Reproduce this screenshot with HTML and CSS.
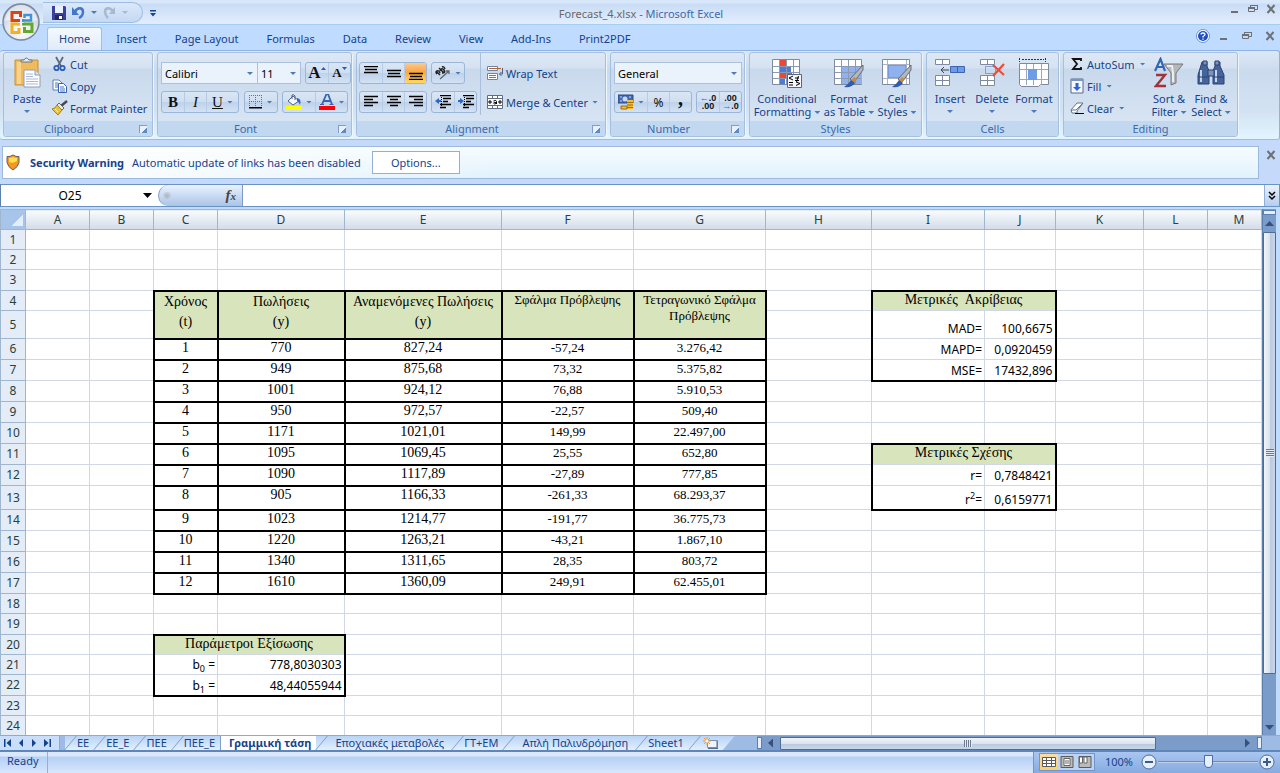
FILE: index.html
```html
<!DOCTYPE html>
<html lang="el">
<head>
    <meta charset="UTF-8">
    <meta name="viewport" content="width=device-width, initial-scale=1.0">
    <title>Forecast_4.xlsx - Microsoft Excel</title>
    <link rel="stylesheet" href="styles.css">
</head>
<body>
    <header class="titlebar">
        <button class="office" aria-label="Office">
            <svg width="40" height="40" viewBox="0 0 40 40">
                <defs>
                    <radialGradient id="orb" cx="50%" cy="75%" r="75%"><stop offset="0" stop-color="#fff"/><stop offset=".55" stop-color="#dfe5ef"/><stop offset="1" stop-color="#a9b6cc"/></radialGradient>
                </defs>
                <circle cx="20" cy="20" r="18" fill="url(#orb)" stroke="#7a879d" stroke-width="1.5"/>
                <path d="M4 19a16 16 0 0 1 32 0q-16-5-32 0z" fill="#fff" opacity=".55"/>
                <g fill="none" stroke-width="3">
                    <path d="M17 18.500H11V10.500h8.500V15" stroke="#dc4310"/>
                    <path d="M23 18.500h7V13h-6.500v3" stroke="#3f94dd" stroke-width="2.500"/>
                    <path d="M17 22h-6v8.500h7V26" stroke="#f5b21c"/>
                    <path d="M22.500 22H31v7.500h-7.500V25" stroke="#63a72c"/>
                </g>
                <path d="M16 17h3v3h-3z" fill="#dc4310"/><path d="M21 17h2.500v3H21z" fill="#3f94dd"/><path d="M16 21h3v2.500h-3z" fill="#f5b21c"/><path d="M21 21h2.500v2.500H21z" fill="#63a72c"/>
            </svg>
        </button>
        <div class="quick">
            <button aria-label="Save"><svg width="14" height="14" viewBox="0 0 14 14"><path d="M0 0h13l1 1v13H0z" fill="#3a3f9d"/><path d="M3 0h8v7H3z" fill="#e8f0fc"/><path d="M3 9h8v5H3z" fill="#23265f"/><path d="M7 10h3v3H7z" fill="#fff"/></svg></button>
            <button aria-label="Undo"><svg width="13" height="13" viewBox="0 0 13 13"><path d="M3 6C5 1 11 1 11 6c0 3-2 5-4 6" fill="none" stroke="#4377c9" stroke-width="2.500"/><path d="M0 1v8h7z" fill="#4377c9"/></svg></button>
            <span class="arrow"></span>
            <button aria-label="Redo"><svg width="13" height="13" viewBox="0 0 13 13"><path d="M10 6C8 1 2 1 2 6c0 3 2 5 3 6" fill="none" stroke="#a9b8cd" stroke-width="2.500"/><path d="M12 1v7H6z" fill="#a9b8cd"/></svg></button>
            <span class="arrow pale"></span>
        </div>
        <button class="customize" aria-label="Customize"><svg width="6" height="7" viewBox="0 0 6 7"><path d="M0 0h6v1.500H0zM0 3h6L3 6.500z" fill="#1b448e"/></svg></button>
        <h1 class="title"><span>Forecast_4.xlsx</span> - Microsoft Excel</h1>
        <div class="win-buttons">
            <button aria-label="Minimize"><svg width="10" height="10" viewBox="0 0 10 10"><path d="M1 7h7v2H1z" fill="#6d7175"/></svg></button>
            <button aria-label="Restore"><svg width="10" height="10" viewBox="0 0 10 10"><path d="M.5 3.500h6v4h-6zM2.500 3V1.500h7v4H7" fill="none" stroke="#6d7175"/><path d="M0 3h7v2H0zM2 1h8v1H2z" fill="#6d7175"/></svg></button>
            <button aria-label="Close"><svg width="10" height="10" viewBox="0 0 10 10"><path d="M1.500 1l7 8M8.500 1l-7 8" stroke="#6d7175" stroke-width="2"/></svg></button>
        </div>
    </header>

    <nav class="menu">
        <a class="active" href="#">Home</a>
        <a href="#">Insert</a>
        <a href="#">Page Layout</a>
        <a href="#">Formulas</a>
        <a href="#">Data</a>
        <a href="#">Review</a>
        <a href="#">View</a>
        <a href="#">Add-Ins</a>
        <a href="#">Print2PDF</a>
        <div class="win-buttons">
            <button aria-label="Help"><svg width="14" height="14" viewBox="0 0 14 14"><circle cx="7" cy="7" r="6.500" fill="#fff" stroke="#6f93c8"/><circle cx="7" cy="7" r="5" fill="#1d50c4"/><path d="M5 5.500Q5 4 7 4t2 1.500Q9 6.500 7 7.500v1M7 9.500v1.200" fill="none" stroke="#fff" stroke-width="1.300"/></svg></button>
            <button aria-label="Minimize workbook"><svg width="10" height="10" viewBox="0 0 10 10"><path d="M1 7h7v2H1z" fill="#6d7175"/></svg></button>
            <button aria-label="Restore workbook"><svg width="10" height="10" viewBox="0 0 10 10"><path d="M.5 3.500h6v4h-6zM2.500 3V1.500h7v4H7" fill="none" stroke="#6d7175"/><path d="M0 3h7v2H0zM2 1h8v1H2z" fill="#6d7175"/></svg></button>
            <button aria-label="Close workbook"><svg width="10" height="10" viewBox="0 0 10 10"><path d="M1.500 1l7 8M8.500 1l-7 8" stroke="#6d7175" stroke-width="2"/></svg></button>
        </div>
    </nav>

    <section class="ribbon">
        <div class="group clipboard">
            <div class="tools">
                <button class="big">
                    <svg width="28" height="32" viewBox="0 0 28 32"><path d="M2 3h23v25H2z" fill="#f0bb5c" stroke="#c4903b"/><path d="M4 5h4v22H4z" fill="#f8d38d"/><path d="M8 5V3h3q2-4 5 0h3v2z" fill="#e4e9f0" stroke="#6c7687"/><path d="M11 13h11l5 5v12H11z" fill="#fff" stroke="#8e9db5"/><path d="M22 13v5h5" fill="#dbe5f2" stroke="#8e9db5"/><path d="M13 17h7M13 19.500h7M13 22h12M13 24.500h12M13 27h12" stroke="#aab9cf"/></svg>
                    <span>Paste</span><span class="arrow"></span>
                </button>
                <div class="stack">
                    <button><svg width="16" height="16" viewBox="0 0 16 16"><path d="M4 1l5 9M11 1l-5 9" stroke="#5c6b82" stroke-width="1.800"/><circle cx="4.500" cy="12" r="2.200" fill="none" stroke="#2f5db5" stroke-width="1.800"/><circle cx="10.500" cy="12" r="2.200" fill="none" stroke="#2f5db5" stroke-width="1.800"/></svg>Cut</button>
                    <button><svg width="16" height="16" viewBox="0 0 16 16"><path d="M1 2h6l3 3v7H1z" fill="#fff" stroke="#5c7fb8"/><path d="M3 5h3M3 7h4M3 9h4" stroke="#4377c9"/><path d="M6.500 5.500h5l3 3v6h-8z" fill="#fff" stroke="#3561ad"/><path d="M8 9h4M8 11h5M8 13h5" stroke="#4377c9"/></svg>Copy</button>
                    <button><svg width="16" height="16" viewBox="0 0 16 16"><path d="M15 1l-6 5" stroke="#444a58" stroke-width="2.500"/><path d="M7 3l5 5-2 2-5-5z" fill="#e9eaf0" stroke="#666"/><path d="M5 5l5 5-4 5-6-6q3 0 5-4z" fill="#ecc33d" stroke="#a5801c"/><path d="M3 9l3 3" stroke="#fff3b5"/></svg>Format Painter</button>
                </div>
            </div>
            <h2>Clipboard<i class="launch"></i></h2>
        </div>

        <div class="group font">
            <div class="tools rows">
                <div class="row">
                    <div class="pair">
                        <select class="font-name" aria-label="Font"><option>Calibri</option></select>
                        <select class="font-size" aria-label="Font size"><option>11</option></select>
                    </div>
                    <div class="set">
                        <button class="grow" aria-label="Increase size"><b>A</b><svg width="5" height="3" viewBox="0 0 5 3"><path d="M0 3h5L2.500 0z" fill="#2b5ca8"/></svg></button>
                        <button class="shrink" aria-label="Decrease size"><b>A</b><svg width="5" height="3" viewBox="0 0 5 3"><path d="M0 0h5L2.500 3z" fill="#2b5ca8"/></svg></button>
                    </div>
                </div>
                <div class="row">
                    <div class="set letters">
                        <button><b>B</b></button>
                        <button><i>I</i></button>
                        <button class="wide"><u>U</u><span class="arrow"></span></button>
                    </div>
                    <div class="set">
                        <button class="wide" aria-label="Borders"><svg width="14" height="14" viewBox="0 0 14 14"><path d="M.5 0v12M6.500 0v12M12.500 0v12M0 .5h13M0 6.500h13" stroke="#66707f" stroke-dasharray="1 1"/><path d="M0 12h13v1.500H0z" fill="#000"/></svg><span class="arrow"></span></button>
                    </div>
                    <div class="set">
                        <button class="wide" aria-label="Fill colour"><svg width="16" height="16" viewBox="0 0 16 16"><path d="M2 7l5-5 6 5-6 4z" fill="#f5f8fd" stroke="#4e6287"/><path d="M6 5V1q2-1 3 1v4" fill="none" stroke="#4e6287"/><path d="M11 4q5 1 3 7-1-3-3-4z" fill="#2d66c4"/><path d="M0 12h16v4H0z" fill="#ff0"/></svg><span class="arrow"></span></button>
                        <button class="wide" aria-label="Font colour"><svg width="16" height="16" viewBox="0 0 16 16"><path d="M0 12h16v4H0z" fill="#f00"/><path d="M3 10.500L7.500 0h1.500l4 10.500M4 7h7" fill="none" stroke="#3665ad" stroke-width="1.800"/><path d="M1 10.500h4M10.500 10.500h4" stroke="#3665ad"/></svg><span class="arrow"></span></button>
                    </div>
                </div>
            </div>
            <h2>Font<i class="launch"></i></h2>
        </div>

        <div class="group alignment">
            <div class="tools">
                <div class="rows">
                    <div class="row">
                        <div class="set">
                            <button aria-label="Top align"><svg width="14" height="14" viewBox="0 0 14 14"><path d="M0 .5h14M1 3.500h12M0 6.500h14" stroke="#000" stroke-width="1.500"/></svg></button>
                            <button aria-label="Middle align"><svg width="14" height="14" viewBox="0 0 14 14"><path d="M0 4.500h14M1 7.500h12M0 10.500h14" stroke="#000" stroke-width="1.500"/></svg></button>
                            <button class="on" aria-label="Bottom align"><svg width="14" height="14" viewBox="0 0 14 14"><path d="M0 7.500h14M1 10.500h12M0 13.500h14" stroke="#000" stroke-width="1.500"/></svg></button>
                        </div>
                        <div class="set">
                            <button class="wide" aria-label="Orientation"><svg width="16" height="14" viewBox="0 0 16 14"><path d="M1 5l4 4M2 8q-2-2 0-3t3 2M4 2l5 5M5 5q2-4 4-1t-2 3M10 3q-1-3-3-2" fill="none" stroke="#222" stroke-width="1.500"/><path d="M5 13l9-8M14 8V5h-3" stroke="#5c6574" fill="none" stroke-width="1.300"/></svg><span class="arrow"></span></button>
                        </div>
                    </div>
                    <div class="row">
                        <div class="set">
                            <button aria-label="Align left"><svg width="14" height="14" viewBox="0 0 14 14"><path d="M0 1.500h14M0 4.500h9M0 7.500h14M0 10.500h9" stroke="#000" stroke-width="1.500"/></svg></button>
                            <button aria-label="Center"><svg width="14" height="14" viewBox="0 0 14 14"><path d="M0 1.500h14M3 4.500h8M0 7.500h14M3 10.500h8" stroke="#000" stroke-width="1.500"/></svg></button>
                            <button aria-label="Align right"><svg width="14" height="14" viewBox="0 0 14 14"><path d="M0 1.500h14M5 4.500h9M0 7.500h14M5 10.500h9" stroke="#000" stroke-width="1.500"/></svg></button>
                        </div>
                        <div class="set">
                            <button aria-label="Decrease indent"><svg width="16" height="14" viewBox="0 0 16 14"><path d="M5 .5h11M8 3.500h8M8 6.500h5M5 9.500h11M5 12.500h6" stroke="#000" stroke-width="1.500"/><path d="M6.500 0v14" stroke="#000" stroke-dasharray="1 1"/><path d="M0 6l4-3v2h2v2H4v2z" fill="#2c66c9"/></svg></button>
                            <button aria-label="Increase indent"><svg width="16" height="14" viewBox="0 0 16 14"><path d="M5 .5h11M8 3.500h8M8 6.500h5M5 9.500h11M5 12.500h6" stroke="#000" stroke-width="1.500"/><path d="M6.500 0v14" stroke="#000" stroke-dasharray="1 1"/><path d="M6 6L2 3v2H0v2h2v2z" fill="#2c66c9"/></svg></button>
                        </div>
                    </div>
                </div>
                <div class="rows labelled">
                    <button><svg width="17" height="16" viewBox="0 0 17 16"><path d="M.5 1.500h10v4H.5zM.5 8.500h10v6H.5z" fill="#fff" stroke="#6d82a6"/><path d="M2 3.500h12M2 10.500h7M2 12.500h7" stroke="#b3672a"/><path d="M15.500 3v6h-3M14.500 7l-2 2 2 2" fill="none" stroke="#4f6285"/></svg>Wrap Text</button>
                    <button><svg width="17" height="16" viewBox="0 0 17 16"><path d="M.5 1.500h15v13H.5z" fill="#fff" stroke="#5d6d88"/><path d="M1 4.500h14M1 11.500h14M5.500 2v3M10.500 2v3M5.500 11v3M10.500 11v3" stroke="#5d6d88"/><path d="M1 8h4M3 6v4M11 8h4M13 6v4M6.500 7q3-1.500 3 .5V10M9.500 8.500q-3-.5-3 .7t3 .3" fill="none" stroke="#000"/></svg>Merge &amp; Center<span class="arrow"></span></button>
                </div>
            </div>
            <h2>Alignment<i class="launch"></i></h2>
        </div>

        <div class="group number">
            <div class="tools rows">
                <select class="format" aria-label="Number format"><option>General</option></select>
                <div class="row">
                    <div class="set">
                        <button class="wide money" aria-label="Accounting format"><svg width="16" height="16" viewBox="0 0 16 16"><path d="M0 1h15v8H0z" fill="#4269b3" stroke="#2d4986"/><circle cx="7" cy="5" r="2.500" fill="#c9d8f1"/><path d="M2 3h2M11 3h2M2 7h2M11 7h2" stroke="#c9d8f1"/><path d="M9 6h6v9H9z" fill="#f3bd2d"/><path d="M9 8.500h6M9 11h6M9 13.500h6" stroke="#a06d10"/><path d="M3 12h6v3H3z" fill="#f3bd2d" stroke="#a06d10"/></svg><span class="arrow"></span></button>
                        <button class="sign">%</button>
                        <button class="sign comma"><b>,</b></button>
                    </div>
                    <div class="set decimals">
                        <button><span><em>←</em>.0</span><span>.00</span></button>
                        <button><span>.00</span><span><em>→</em>.0</span></button>
                    </div>
                </div>
            </div>
            <h2>Number<i class="launch"></i></h2>
        </div>

        <div class="group styles">
            <div class="tools">
                <button class="big">
                    <svg width="30" height="30" viewBox="0 0 30 30"><path d="M.5 1.500h27v25H.5z" fill="#fff" stroke="#7e8a9f"/><path d="M7 2h7v6H7z" fill="#ea4a35"/><path d="M7 8h12v6H7z" fill="#4d7cd8"/><path d="M7 14h13v6H7z" fill="#ea4a35"/><path d="M7 20h6v6H7z" fill="#4d7cd8"/><path d="M7.500 2v24M14.500 2v24M21.500 2v24M1 8.500h26M1 14.500h26M1 20.500h26" stroke="#8c99b3"/><path d="M15.500 16.500h14v13h-14z" fill="#f6f6fa" stroke="#5f6678"/><path d="M21 18l-4 2 4 2M17 24.500h4M17 27h4M23 20h4M23 22.500h4M24 24l4 1.500-4 2M26.500 18l-2 6" fill="none" stroke="#000"/></svg>
                    <span>Conditional</span><span>Formatting<span class="arrow"></span></span>
                </button>
                <button class="big">
                    <svg width="30" height="30" viewBox="0 0 30 30"><path d="M.5 1.500h27v25H.5z" fill="#fff" stroke="#7e8a9f"/><path d="M7 8h21v18H7z" fill="#8fb2ee"/><path d="M7.500 2v24M14.500 2v24M21.500 2v24M1 8.500h26M1 14.500h26M1 20.500h26" stroke="#8c99b3"/><path d="M29 7v5l-9 12-4-3z" fill="#b3b7c0" stroke="#666c78"/><path d="M20 19l3 2-3 4-3-2z" fill="#c98b3a"/><path d="M17 22l4 3q-3 5-11 4 4-2 7-7z" fill="#2f5bb0"/></svg>
                    <span>Format</span><span>as Table<span class="arrow"></span></span>
                </button>
                <button class="big">
                    <svg width="30" height="30" viewBox="0 0 30 30"><path d="M.5 1.500h27v25H.5z" fill="#fff" stroke="#7e8a9f"/><path d="M6 7h18v13H6z" fill="#8fb2ee" stroke="#5d86cf"/><path d="M5.500 2v24M24.500 2v24M1 6.500h26M1 20.500h26" stroke="#a9b3c7"/><path d="M29 7v5l-9 12-4-3z" fill="#b3b7c0" stroke="#666c78"/><path d="M20 19l3 2-3 4-3-2z" fill="#c98b3a"/><path d="M17 22l4 3q-3 5-11 4 4-2 7-7z" fill="#2f5bb0"/></svg>
                    <span>Cell</span><span>Styles<span class="arrow"></span></span>
                </button>
            </div>
            <h2>Styles</h2>
        </div>

        <div class="group cells">
            <div class="tools">
                <button class="big">
                    <svg width="30" height="30" viewBox="0 0 30 30"><path d="M.5 1.500h14v5H.5zM7.500 2v5M.5 17.500h14v10H.5zM7.500 18v9M1 22.500h13" fill="#fff" stroke="#7e8a9f"/><path d="M15.500 8.500h14v6h-14z" fill="#6d9be6" stroke="#3c64b0"/><path d="M22.500 9v6" stroke="#3c64b0"/><path d="M6 12h8M9 9l-3 3 3 3" fill="none" stroke="#3d4654"/></svg>
                    <span>Insert</span><span class="arrow"></span>
                </button>
                <button class="big">
                    <svg width="30" height="30" viewBox="0 0 30 30"><path d="M3.500 1.500h14v5h-14zM10.500 2v5M3.500 17.500h14v10h-14zM10.500 18v9M4 22.500h13" fill="#fff" stroke="#7e8a9f"/><path d="M8.500 8.500h10v7h-10z" fill="none" stroke="#3c64b0" stroke-dasharray="1 1"/><path d="M16 7l11 10M27 6L16 18" stroke="#ee4b35" stroke-width="2.200"/></svg>
                    <span>Delete</span><span class="arrow"></span>
                </button>
                <button class="big">
                    <svg width="32" height="30" viewBox="0 0 32 30"><path d="M1.500 5.500h29v21h-8l-2 2h-17l-2-2z" fill="#fff" stroke="#7e8a9f"/><path d="M8.500 6v21M23.500 6v21M2 11.500h28M2 21.500h28M15.500 6v21" stroke="#9aa7bd"/><path d="M10 11h9v11h-9z" fill="#6d9be6"/><path d="M1.500 0v4M27.500 0v4M4 1.500h22" stroke="#333" stroke-dasharray="2 1"/></svg>
                    <span>Format</span><span class="arrow"></span>
                </button>
            </div>
            <h2>Cells</h2>
        </div>

        <div class="group editing">
            <div class="tools">
                <div class="stack">
                    <button><svg width="14" height="16" viewBox="0 0 14 16"><path d="M11 5V3H3l4 5-4 5h8v-2" fill="none" stroke="#111" stroke-width="1.800"/></svg>AutoSum<span class="arrow"></span></button>
                    <button><svg width="14" height="16" viewBox="0 0 14 16"><path d="M1 1h12v14H1z" fill="#f5f9ff" stroke="#56698d"/><path d="M1 1h12v2H1z" fill="#7c95c2"/><path d="M5.500 5h3v4H11l-4 4-4-4h2.500z" fill="#2a67d3"/></svg>Fill<span class="arrow"></span></button>
                    <button><svg width="14" height="16" viewBox="0 0 14 16"><path d="M1 10l6-7h6l-6 8v2H2z" fill="#fff" stroke="#69758b"/><path d="M1 10h5l7-7" fill="none" stroke="#69758b"/><path d="M5 13.500h9" stroke="#000"/></svg>Clear<span class="arrow"></span></button>
                </div>
                <button class="big">
                    <svg width="30" height="30" viewBox="0 0 30 30"><path d="M1 13L6.500 1 11 13M3 9h7" fill="none" stroke="#3565b5" stroke-width="2.200"/><path d="M2 17h9L2 28h10" fill="none" stroke="#a1333a" stroke-width="2.400"/><path d="M10 6h19l-7 9v10l-5 2V15z" fill="#b5b7ba" stroke="#76797e"/><path d="M13 8h5l1 7v9" fill="none" stroke="#eceded" stroke-width="2"/></svg>
                    <span>Sort &amp;</span><span>Filter<span class="arrow"></span></span>
                </button>
                <button class="big">
                    <svg width="30" height="30" viewBox="0 0 30 30"><path d="M6 4h5v4l2 5v13H2V17zM19 4h5v4l4 9v9H17V13l2-5z" fill="#47639b" stroke="#2c4271"/><path d="M7 3h4v4H7zM19 3h4v4h-4zM12 12h6v6h-6z" fill="#7d93bf" stroke="#2c4271"/><path d="M5 12v12M20 12v12" stroke="#c6d5ef" stroke-width="2"/><path d="M2 19h11M17 19h11" stroke="#2c4271"/></svg>
                    <span>Find &amp;</span><span>Select<span class="arrow"></span></span>
                </button>
            </div>
            <h2>Editing</h2>
        </div>
    </section>

    <section class="message">
        <div class="message-box">
            <svg width="14" height="17" viewBox="0 0 14 17"><path d="M7 1q3 2 6 1.500v6Q12 13 7 16 2 13 1 8.500v-6Q4 3 7 1z" fill="#f9961d" stroke="#5b6074"/><path d="M3 4q2 0 4-1 2 1 4 1v3q-4 3-8 1z" fill="#ffdf50"/></svg>
            <strong>Security Warning</strong>
            <span>Automatic update of links has been disabled</span>
            <button>Options...</button>
        </div>
        <button class="message-close" aria-label="Close"><svg width="10" height="10" viewBox="0 0 10 10"><path d="M1.500 1l7 8M8.500 1l-7 8" stroke="#6d7175" stroke-width="2"/></svg></button>
    </section>

    <section class="formula">
        <input class="name-box" aria-label="Name box" value="O25">
        <button class="name-arrow" aria-label="Names"></button>
        <div class="fx"><i class="dot"></i><em>f<small>x</small></em></div>
        <input class="formula-input" aria-label="Formula" value="">
        <button class="expand" aria-label="Expand"><svg width="8" height="10" viewBox="0 0 8 10"><path d="M1 1l3 3 3-3M1 5l3 3 3-3" fill="none" stroke="#000" stroke-width="1.500"/></svg></button>
    </section>

    <main class="sheet">
        <div class="grid">
            <table>
                <colgroup>
                    <col class="w-head"><col class="w-64"><col class="w-64"><col class="w-64"><col class="w-127"><col class="w-157"><col class="w-132"><col class="w-132"><col class="w-106"><col class="w-113"><col class="w-71"><col class="w-88"><col class="w-64"><col>
                </colgroup>
                <thead>
                    <tr class="h20"><th class="corner"></th><th>A</th><th>B</th><th>C</th><th>D</th><th>E</th><th>F</th><th>G</th><th>H</th><th>I</th><th>J</th><th>K</th><th>L</th><th class="last">M</th></tr>
                </thead>
                <tbody>
                    <tr class="h20"><th>1</th><td></td><td></td><td></td><td></td><td></td><td></td><td></td><td></td><td></td><td></td><td></td><td></td><td></td></tr>
                    <tr class="h20"><th>2</th><td></td><td></td><td></td><td></td><td></td><td></td><td></td><td></td><td></td><td></td><td></td><td></td><td></td></tr>
                    <tr><th>3</th><td></td><td></td><td></td><td></td><td></td><td></td><td></td><td></td><td></td><td></td><td></td><td></td><td></td></tr>
                    <tr class="h20"><th>4</th><td></td><td></td><td class="box head" rowspan="2">Χρόνος<br>(t)</td><td class="box head" rowspan="2">Πωλήσεις<br>(y)</td><td class="box head" rowspan="2">Αναμενόμενες Πωλήσεις<br>(y)</td><td class="box head small" rowspan="2">Σφάλμα Πρόβλεψης</td><td class="box head small" rowspan="2">Τετραγωνικό Σφάλμα Πρόβλεψης</td><td></td><td class="caption" colspan="2">Μετρικές &nbsp;Ακρίβειας</td><td></td><td></td><td></td></tr>
                    <tr class="h28"><th>5</th><td></td><td></td><td></td><td class="left">MAD=</td><td class="right">100,6675</td><td></td><td></td><td></td></tr>
                    <tr><th>6</th><td></td><td></td><td class="box">1</td><td class="box">770</td><td class="box">827,24</td><td class="box small">-57,24</td><td class="box small">3.276,42</td><td></td><td class="left">MAPD=</td><td class="right">0,0920459</td><td></td><td></td><td></td></tr>
                    <tr><th>7</th><td></td><td></td><td class="box">2</td><td class="box">949</td><td class="box">875,68</td><td class="box small">73,32</td><td class="box small">5.375,82</td><td></td><td class="left bottom">MSE=</td><td class="right bottom">17432,896</td><td></td><td></td><td></td></tr>
                    <tr><th>8</th><td></td><td></td><td class="box">3</td><td class="box">1001</td><td class="box">924,12</td><td class="box small">76,88</td><td class="box small">5.910,53</td><td></td><td></td><td></td><td></td><td></td><td></td></tr>
                    <tr><th>9</th><td></td><td></td><td class="box">4</td><td class="box">950</td><td class="box">972,57</td><td class="box small">-22,57</td><td class="box small">509,40</td><td></td><td></td><td></td><td></td><td></td><td></td></tr>
                    <tr><th>10</th><td></td><td></td><td class="box">5</td><td class="box">1171</td><td class="box">1021,01</td><td class="box small">149,99</td><td class="box small">22.497,00</td><td></td><td></td><td></td><td></td><td></td><td></td></tr>
                    <tr><th>11</th><td></td><td></td><td class="box">6</td><td class="box">1095</td><td class="box">1069,45</td><td class="box small">25,55</td><td class="box small">652,80</td><td></td><td class="caption" colspan="2">Μετρικές Σχέσης</td><td></td><td></td><td></td></tr>
                    <tr><th>12</th><td></td><td></td><td class="box">7</td><td class="box">1090</td><td class="box">1117,89</td><td class="box small">-27,89</td><td class="box small">777,85</td><td></td><td class="left">r=</td><td class="right">0,7848421</td><td></td><td></td><td></td></tr>
                    <tr class="h24"><th>13</th><td></td><td></td><td class="box">8</td><td class="box">905</td><td class="box">1166,33</td><td class="box small">-261,33</td><td class="box small">68.293,37</td><td></td><td class="left bottom">r<sup>2</sup>=</td><td class="right bottom">0,6159771</td><td></td><td></td><td></td></tr>
                    <tr><th>14</th><td></td><td></td><td class="box">9</td><td class="box">1023</td><td class="box">1214,77</td><td class="box small">-191,77</td><td class="box small">36.775,73</td><td></td><td></td><td></td><td></td><td></td><td></td></tr>
                    <tr><th>15</th><td></td><td></td><td class="box">10</td><td class="box">1220</td><td class="box">1263,21</td><td class="box small">-43,21</td><td class="box small">1.867,10</td><td></td><td></td><td></td><td></td><td></td><td></td></tr>
                    <tr><th>16</th><td></td><td></td><td class="box">11</td><td class="box">1340</td><td class="box">1311,65</td><td class="box small">28,35</td><td class="box small">803,72</td><td></td><td></td><td></td><td></td><td></td><td></td></tr>
                    <tr><th>17</th><td></td><td></td><td class="box">12</td><td class="box">1610</td><td class="box">1360,09</td><td class="box small">249,91</td><td class="box small">62.455,01</td><td></td><td></td><td></td><td></td><td></td><td></td></tr>
                    <tr class="h20"><th>18</th><td></td><td></td><td></td><td></td><td></td><td></td><td></td><td></td><td></td><td></td><td></td><td></td><td></td></tr>
                    <tr><th>19</th><td></td><td></td><td></td><td></td><td></td><td></td><td></td><td></td><td></td><td></td><td></td><td></td><td></td></tr>
                    <tr class="h20"><th>20</th><td></td><td></td><td class="caption" colspan="2">Παράμετροι Εξίσωσης</td><td></td><td></td><td></td><td></td><td></td><td></td><td></td><td></td><td></td></tr>
                    <tr class="h20"><th>21</th><td></td><td></td><td class="left">b<sub>0</sub> =</td><td class="right">778,8030303</td><td></td><td></td><td></td><td></td><td></td><td></td><td></td><td></td><td></td></tr>
                    <tr><th>22</th><td></td><td></td><td class="left bottom">b<sub>1</sub> =</td><td class="right bottom">48,44055944</td><td></td><td></td><td></td><td></td><td></td><td></td><td></td><td></td><td></td></tr>
                    <tr class="h20"><th>23</th><td></td><td></td><td></td><td></td><td></td><td></td><td></td><td></td><td></td><td></td><td></td><td></td><td></td></tr>
                    <tr><th>24</th><td></td><td></td><td></td><td></td><td></td><td></td><td></td><td></td><td></td><td></td><td></td><td></td><td></td></tr>
                </tbody>
            </table>
        </div>
        <div class="vscroll">
            <i class="split"></i>
            <i class="tri up"></i>
            <div class="thumb"><i class="grip"></i></div>
            <i class="tri down"></i>
        </div>
    </main>

    <div class="tabs">
        <div class="tab-nav">
            <button aria-label="First"><svg width="8" height="8" viewBox="0 0 8 8"><path d="M0 0h1.500v8H0zM7 0v8L2.500 4z" fill="#15428b"/></svg></button>
            <button aria-label="Previous"><svg width="8" height="8" viewBox="0 0 8 8"><path d="M6 0v8L2 4z" fill="#15428b"/></svg></button>
            <button aria-label="Next"><svg width="8" height="8" viewBox="0 0 8 8"><path d="M2 0v8l4-4z" fill="#15428b"/></svg></button>
            <button aria-label="Last"><svg width="8" height="8" viewBox="0 0 8 8"><path d="M6.500 0H8v8H6.500zM1 0v8l4.500-4z" fill="#15428b"/></svg></button>
        </div>
        <div class="tab-list">
            <button>ΕΕ</button>
            <button>ΕΕ_Ε</button>
            <button>ΠΕΕ</button>
            <button>ΠΕΕ_Ε</button>
            <button class="current">Γραμμική τάση</button>
            <button class="roomy">Εποχιακές μεταβολές</button>
            <button>ΓΤ+ΕΜ</button>
            <button class="roomy">Απλή Παλινδρόμηση</button>
            <button>Sheet1</button>
            <button class="new" aria-label="New sheet"><svg width="16" height="13" viewBox="0 0 16 13"><path d="M4.500 3.500h10v7h-10z" fill="#eef4fc" stroke="#7c8fae"/><path d="M5 11.500h10M14 4v7" stroke="#5a6c8c"/><path d="M4 0v8M0 4h8M1 1l6 6M7 1L1 7" stroke="#ef9a2a"/><circle cx="4" cy="4" r="1.500" fill="#fff"/></svg></button>
        </div>
        <div class="hscroll">
            <i class="split"></i>
            <i class="tri prev"></i>
            <div class="track"><div class="thumb"><i class="grip"></i></div></div>
            <i class="tri next"></i>
            <i class="split"></i>
        </div>
    </div>

    <footer class="status">
        <span class="ready">Ready</span>
        <div class="zoom">
            <div class="views">
                <button class="on" aria-label="Normal"><svg width="14" height="12" viewBox="0 0 14 12"><path d="M.5 1.500h13v9H.5zM1 4.500h12M1 7.500h12M4.500 2v9M9.500 2v9" fill="#fff" stroke="#5b5b5b"/></svg></button>
                <button aria-label="Page layout"><svg width="14" height="12" viewBox="0 0 14 12"><path d="M1 .5h12v11H1z" fill="#bbb" stroke="#5b5b5b"/><path d="M4 2.500h6v7H4z" fill="#fff" stroke="#666"/><path d="M5 5h4M5 7h4" stroke="#666"/></svg></button>
                <button aria-label="Page break"><svg width="14" height="12" viewBox="0 0 14 12"><path d="M1 .5h12v11H1z" fill="#bbb" stroke="#5b5b5b"/><path d="M1.500 1h3v6h-3zM6 1h3v6H6z" fill="#fff" stroke="#666"/></svg></button>
            </div>
            <span class="percent">100%</span>
            <button class="round" aria-label="Zoom out"><svg width="16" height="16" viewBox="0 0 16 16"><circle cx="8" cy="8" r="7" fill="#e6effc" stroke="#4d6c9f"/><path d="M4 7h8v2H4z" fill="#3d5a8c"/></svg></button>
            <input type="range" min="0" max="200" value="100" aria-label="Zoom">
            <button class="round" aria-label="Zoom in"><svg width="16" height="16" viewBox="0 0 16 16"><circle cx="8" cy="8" r="7" fill="#e6effc" stroke="#4d6c9f"/><path d="M4 7h8v2H4zM7 4h2v8H7z" fill="#3d5a8c"/></svg></button>
        </div>
    </footer>
</body>
</html>
```

FILE: styles.css
```css
* {
    box-sizing: border-box;
}
body {
    margin: 0;
    height: 100vh;
    display: flex;
    flex-direction: column;
    overflow: hidden;
    background: #bfdbff;
    color: #15428b;
    font: 11px/13px "Noto Sans", "Open Sans", sans-serif;
}
button, input, select {
    font: inherit;
    color: inherit;
    margin: 0;
    padding: 0;
    border: 0;
    background: none;
}
svg {
    display: block;
    flex: none;
}
h1, h2 {
    margin: 0;
    font-size: 11px;
    font-weight: normal;
}
.arrow {
    display: inline-block;
    flex: none;
    width: 6px;
    height: 3px;
    background: #4a7abb;
    clip-path: polygon(0 0, 100% 0, 50% 100%);
}
.pale {
    background: #a9b8cd;
}

/* title bar */
.titlebar {
    position: relative;
    display: flex;
    flex: none;
    height: 25px;
    padding: 2px 4px 0 0;
    border-bottom: 1px solid #a6cdf2;
    background: linear-gradient(#d9e7fa 0, #d9e7fa 3px, #c9dcf5 4px, #e3eefd 100%);
}
.office {
    position: absolute;
    top: 2px;
    left: 1px;
    z-index: 2;
}
.quick {
    display: flex;
    align-items: center;
    gap: 6px;
    width: 100px;
    height: 21px;
    margin-left: 43px;
    padding-left: 9px;
    border: 1px solid #9fbde3;
    border-left: 0;
    border-radius: 0 11px 11px 0;
    background: linear-gradient(#dbe8fa, #c5d9f3);
}
.customize {
    margin-left: 7px;
}
.title {
    flex: 1;
    padding-right: 104px;
    line-height: 24px;
    text-align: center;
    color: #3e6aaa;
}
.title span {
    color: #696969;
}
.win-buttons {
    display: flex;
    gap: 8px;
    align-items: center;
}
.titlebar .win-buttons {
    height: 14px;
}

/* ribbon tabs */
.menu {
    display: flex;
    flex: none;
    height: 25px;
    padding: 2px 5px 0 47px;
}
.menu a {
    padding: 0 14px;
    line-height: 24px;
    color: #15428b;
    text-decoration: none;
}
.menu .active {
    padding: 0 11px;
    border: 1px solid #9cc0ea;
    border-bottom: 0;
    border-radius: 3px 3px 0 0;
    background: linear-gradient(#f4f9ff, #e1ebf8);
    line-height: 22px;
}
.menu .win-buttons {
    margin-left: auto;
    gap: 13px;
    height: 18px;
}
.menu .win-buttons button:first-child {
    margin-right: -4px;
}

/* ribbon */
.ribbon {
    display: flex;
    flex: none;
    gap: 4px;
    height: 90px;
    padding: 1px 3px 2px;
    border: 1px solid #8db2e3;
    border-left-width: 0;
    border-bottom-color: #8fc7d8;
    border-radius: 3px;
    background: linear-gradient(#dce8f6 0, #cbdbee 20px, #d3e2f3 60px, #e2f5ff 100%);
}
.group {
    display: flex;
    flex: none;
    flex-direction: column;
    height: 85px;
    border: 1px solid #a5c0df;
    border-radius: 3px;
    box-shadow: 1px 1px 0 #edf5fd;
    background: linear-gradient(#dee8f5 0, #d5e2f1 15px, #c9d9ec 16px, #dae7f5 100%);
}
.group h2 {
    position: relative;
    height: 15px;
    background: #c1d8f0;
    border-radius: 0 0 3px 3px;
    color: #3e6aaa;
    line-height: 15px;
    text-align: center;
}
.group h2:has(.launch) {
    padding-right: 18px;
}
.launch {
    position: absolute;
    right: 5px;
    top: 4px;
    width: 8px;
    height: 8px;
    border: 1px solid #7f9fca;
    border-width: 1px 0 0 1px;
    background: linear-gradient(135deg, #e8f1fb 60%, #5f8ac2 60%);
}
.clipboard {
    width: 150px;
}
.font {
    width: 195px;
}
.alignment {
    width: 250px;
}
.number {
    width: 135px;
}
.styles {
    width: 173px;
}
.cells {
    width: 133px;
}
.editing {
    width: 175px;
}
.tools {
    display: flex;
    flex: 1;
}
.big {
    display: flex;
    flex-direction: column;
    align-items: center;
    padding-top: 4px;
    white-space: nowrap;
}
.big svg {
    height: 32px;
    margin-bottom: 3px;
}
.big > .arrow {
    margin-top: 5px;
}
.big span .arrow {
    margin-left: 3px;
    vertical-align: 2px;
}
.clipboard .big {
    width: 46px;
}
.styles .big:nth-child(1) {
    width: 74px;
}
.styles .big:nth-child(2) {
    width: 50px;
}
.styles .big:nth-child(3) {
    width: 46px;
}
.cells .big {
    width: 42px;
}
.cells .tools {
    padding-left: 2px;
}
.editing .big {
    width: 42px;
}
.stack {
    display: flex;
    flex-direction: column;
    padding-left: 2px;
}
.stack button {
    display: flex;
    align-items: center;
    gap: 2px;
    height: 22px;
    white-space: nowrap;
}
.editing .stack {
    width: 84px;
    padding-left: 6px;
}
.editing .stack button {
    gap: 3px;
}
.stack .arrow, .labelled .arrow {
    margin-left: 2px;
}
.rows {
    display: flex;
    flex-direction: column;
    gap: 7px;
    padding: 9px 3px 0;
}
.row {
    display: flex;
    gap: 4px;
}
.font .row {
    justify-content: space-between;
}
.alignment .rows:first-child {
    padding-left: 2px;
    padding-right: 3px;
}
.pair {
    display: flex;
}
select {
    height: 22px;
    padding: 0 3px;
    border: 1px solid #abc1de;
    appearance: none;
    color: #000;
    background: #eaf2fb url("data:image/svg+xml,%3Csvg xmlns='http://www.w3.org/2000/svg' width='6' height='3'%3E%3Cpath d='M0 0h6L3 3z' fill='%234a7abb'/%3E%3C/svg%3E") no-repeat right 4px center;
}
.font-name {
    width: 97px;
}
.font-size {
    width: 43px;
    border-left: 0;
}
.format {
    width: 128px;
}
.set {
    display: flex;
    height: 22px;
    border: 1px solid #9ab6da;
    border-radius: 3px;
    background: linear-gradient(#d9e6f5 0, #cfdef0 50%, #bfd2ea 51%, #d3e2f4 100%);
}
.set button {
    display: flex;
    align-items: center;
    justify-content: center;
    width: 22px;
    color: #111;
}
.set button + button {
    border-left: 1px solid #b5cbe6;
}
.set .wide {
    width: 32px;
    gap: 4px;
}
.set .on {
    background: linear-gradient(#fbc992, #fba63f 45%, #ffd86a);
}
.letters button, .grow, .shrink {
    font: 15px "Liberation Serif", serif;
}
.set .grow {
    font-size: 17px;
}
.set .shrink {
    font-size: 13px;
}
.grow svg, .shrink svg {
    align-self: flex-start;
    margin-top: 4px;
}
.labelled {
    margin-bottom: 6px;
    padding: 9px 0 0 6px;
    border-left: 1px solid #a9c0dd;
}
.labelled button {
    display: flex;
    align-items: center;
    gap: 2px;
    height: 22px;
    white-space: nowrap;
}
.set .sign {
    font-size: 12px;
    width: 22px;
}
.set .comma {
    font: 20px/10px "Liberation Serif", serif;
    padding-bottom: 8px;
}
.decimals button {
    flex-direction: column;
    font: bold 9px/8px "Liberation Sans", sans-serif;
}
.decimals em {
    color: #2c66c9;
    font-style: normal;
}

/* message bar */
.message {
    display: flex;
    flex: none;
    height: 44px;
    padding: 6px 4px 5px 2px;
    gap: 7px;
    background: #c5dafa;
}
.message-box {
    display: flex;
    flex: 1;
    align-items: center;
    padding-left: 3px;
    border: 1px solid #9cb9de;
    background: linear-gradient(90deg, #fff 0, #fff0 500px), linear-gradient(#f7fcff, #e1f2fc);
}
.message-box strong {
    margin: 0 8px 0 10px;
}
.message-box button {
    width: 88px;
    height: 23px;
    margin-left: 11px;
    border: 1px solid #93afd5;
    background: #fff;
}
.message-close {
    align-self: flex-start;
    margin-top: 4px;
}

/* formula bar */
.formula {
    display: flex;
    flex: none;
    height: 23px;
    margin-bottom: 2px;
    border: 1px solid #6a93c4;
    border-left-color: #5b7fae;
    background: #fff;
    color: #000;
}
.name-box {
    width: 138px;
    text-align: center;
    font-size: 12px;
}
.name-arrow {
    width: 9px;
    height: 5px;
    margin: 8px 6px 0 4px;
    background: #000;
    clip-path: polygon(0 0, 100% 0, 50% 100%);
}
.fx {
    display: flex;
    align-items: center;
    justify-content: space-between;
    width: 85px;
    padding: 0 6px 0 4px;
    border: 1px solid #7b9cca;
    border-width: 0 1px 0 1px;
    border-radius: 11px 0 0 11px;
    background: linear-gradient(#eaf2fd, #a9c4e8);
}
.fx em {
    font: italic bold 15px "Liberation Serif", serif;
    color: #444;
}
.fx small {
    font-size: 11px;
}
.dot {
    width: 8px;
    height: 8px;
    border-radius: 50%;
    background: radial-gradient(#a9b4c6, #d4dded);
}
.formula-input {
    flex: 1;
    min-width: 0;
}
.expand {
    display: flex;
    align-items: center;
    justify-content: center;
    width: 15px;
    border-left: 1px solid #8fb0da;
    background: linear-gradient(#eaf2fd, #b4cdef);
}

/* worksheet */
.sheet {
    display: flex;
    flex: 1;
    min-height: 0;
    padding-right: 4px;
}
.grid {
    flex: 1;
    overflow: hidden;
    background: #fff;
}
table {
    width: 100%;
    table-layout: fixed;
    border-collapse: collapse;
    color: #000;
}
.w-head {
    width: 25px;
}
.w-64 {
    width: 64px;
}
.w-71 {
    width: 71px;
}
.w-88 {
    width: 88px;
}
.w-106 {
    width: 106px;
}
.w-113 {
    width: 113px;
}
.w-127 {
    width: 127px;
}
.w-132 {
    width: 132px;
}
.w-157 {
    width: 157px;
}
tr {
    height: 21px;
}
.h20 {
    height: 20px;
}
.h24 {
    height: 24px;
}
.h28 {
    height: 28px;
}
th, td {
    padding: 0 2px;
    border: 1px solid #d0d7e5;
    font-size: 12px;
    line-height: 16px;
    white-space: nowrap;
}
th {
    padding: 0;
    border-color: #9eb6ce;
    background: #e4ecf7;
    color: #27413e;
    font-weight: normal;
}
thead th {
    background: linear-gradient(#f9fcfd, #d3dbe9);
}
thead .last {
    padding-left: 9px;
}
.corner {
    background: linear-gradient(135deg, #e4eefb00 50%, #e4eefb 50%) no-repeat 11px 5px / 11px 11px, #a9c4e9;
}
.box, .caption {
    border: 2px solid #000;
    font: 14px/16px "Liberation Serif", serif;
    text-align: center;
    vertical-align: top;
}
.small {
    font-size: 13px;
    line-height: 15px;
}
.head, .caption {
    background: #d8e4bc;
}
.head {
    line-height: 20px;
}
.head.small {
    line-height: 16px;
    white-space: normal;
}
.caption {
    border-bottom: 0;
}
.left, .right {
    padding-bottom: 1px;
    text-align: right;
    vertical-align: bottom;
}
.left {
    border-left: 2px solid #000;
}
.right {
    border-right: 2px solid #000;
}
.bottom {
    border-bottom: 2px solid #000;
}
sup, sub {
    font-size: 9px;
    line-height: 0;
}

/* scroll bars */
.vscroll {
    display: flex;
    flex-direction: column;
    align-items: center;
    width: 14px;
    padding: 1px 0 5px;
    border-left: 1px solid #5b7fae;
    background: #7b9bc9;
}
.split {
    flex: none;
    border: 1px solid #5b7fae;
    background: #e6effb;
}
.vscroll .split {
    width: 13px;
    height: 5px;
}
.tri {
    flex: none;
    width: 9px;
    height: 5px;
    background: #36507f;
}
.up {
    margin: 6px 0;
    clip-path: polygon(0 100%, 100% 100%, 50% 0);
}
.down {
    margin-top: auto;
    clip-path: polygon(0 0, 100% 0, 50% 100%);
}
.thumb {
    display: flex;
    align-items: center;
    justify-content: center;
    border: 1px solid #4f6b99;
    border-radius: 1px;
}
.vscroll .thumb {
    width: 13px;
    height: 85%;
    background: linear-gradient(90deg, #f1f5fa, #dbe3ee 50%, #b8c8dd 51%, #c9d6e8);
}
.vscroll .grip {
    width: 8px;
    height: 8px;
    background: repeating-linear-gradient(#6d7a8f 0, #6d7a8f 1px, #e3eaf3 1px, #e3eaf3 2px);
}
.hscroll {
    display: flex;
    align-items: center;
    flex: none;
    width: 505px;
    margin-right: 18px;
    margin-left: auto;
    background: #7b9bc9;
}
.hscroll .split {
    width: 5px;
    height: 12px;
}
.prev, .next {
    width: 5px;
    height: 9px;
}
.prev {
    margin: 0 7px 0 6px;
    clip-path: polygon(100% 0, 100% 100%, 0 50%);
}
.next {
    margin: 0 7px;
    clip-path: polygon(0 0, 0 100%, 100% 50%);
}
.track {
    flex: 1;
}
.hscroll .thumb {
    width: 82%;
    height: 13px;
    background: linear-gradient(#f1f5fa, #dbe3ee 50%, #b8c8dd 51%, #c9d6e8);
}
.hscroll .grip {
    width: 8px;
    height: 7px;
    background: repeating-linear-gradient(90deg, #6d7a8f 0, #6d7a8f 1px, #e3eaf3 1px, #e3eaf3 2px);
}

/* sheet tabs */
.tabs {
    display: flex;
    flex: none;
    height: 15px;
    border-top: 1px solid #8fa9cf;
    background: #9dbbe3;
}
.tab-nav {
    display: flex;
    gap: 5px;
    width: 60px;
    padding-left: 4px;
    border-right: 1px solid #8fa9cf;
    background: #c9defa;
}
.tab-list {
    display: flex;
    padding-left: 5px;
}
.tab-list button {
    position: relative;
    padding: 0 5px 0 12px;
    line-height: 14px;
    white-space: nowrap;
    background: linear-gradient(#b9d3f6, #e3effd);
}
.tab-list button::before {
    content: "";
    position: absolute;
    left: 5px;
    top: 0;
    width: 1px;
    height: 14px;
    background: #7f9fcc;
    transform: skewX(-40deg);
}
.tab-list .roomy {
    padding: 0 8px 0 19px;
}
.tab-list .current {
    padding: 0 5px 0 9px;
    background: #fff;
    font-weight: bold;
}
.tab-list .current::before {
    left: 0;
    transform: none;
}
.tab-list .new {
    padding: 0 16px 0 14px;
    clip-path: polygon(0 0, 100% 0, calc(100% - 12px) 100%, 0 100%);
}

/* status bar */
.status {
    display: flex;
    flex: none;
    height: 23px;
    border-top: 2px solid #5f86bb;
    background: linear-gradient(#dbe8fb 0, #dbe8fb 4px, #b4d0f6 5px, #d8e7fb 100%);
}
.ready {
    width: 48px;
    padding-left: 7px;
    border-right: 1px solid #8fb0dc;
    line-height: 18px;
}
.zoom {
    display: flex;
    align-items: center;
    margin-left: auto;
    padding: 0 5px 2px;
    border-left: 1px solid #6f95cb;
    background: linear-gradient(#a9c6ef, #86abe0);
}
.views {
    display: flex;
    border: 1px solid #7096cc;
    background: #bcd3f3;
}
.views button {
    padding: 2px;
    height: 16px;
}
.views .on {
    background: linear-gradient(#fbdba6, #ffd067);
}
.percent {
    margin: 0 8px 0 10px;
}
.zoom input {
    width: 100px;
    height: 16px;
    margin: 0 1px;
    appearance: none;
    background: linear-gradient(#4d6c9f, #e6effc) no-repeat center / 100% 2px;
}
.zoom input::-webkit-slider-thumb {
    appearance: none;
    width: 9px;
    height: 13px;
    border: 1px solid #4d6c9f;
    border-radius: 1px 1px 5px 5px;
    background: #e6effc;
}
```
